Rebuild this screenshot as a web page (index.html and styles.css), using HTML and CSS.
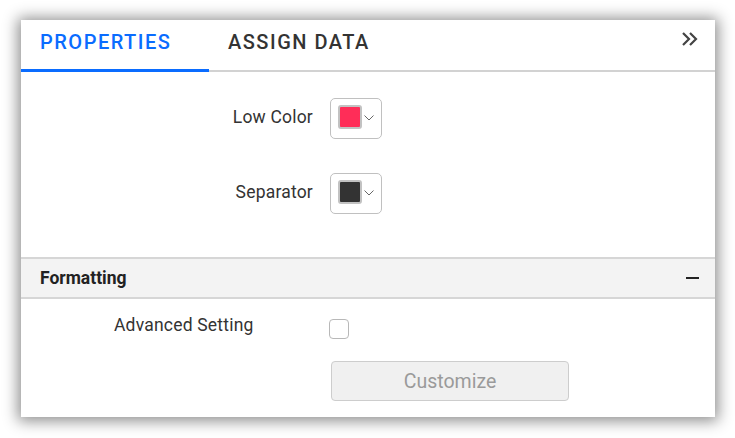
FILE: index.html
```html
<!DOCTYPE html>
<html>
<head>
<meta charset="utf-8">
<link rel="stylesheet" href="styles.css">
</head>
<body>
<div class="panel">
  <div class="tabs">
    <div class="tab active">PROPERTIES</div>
    <div class="tab">ASSIGN DATA</div>
    <div class="tab-spacer"></div>
    <div class="collapse">
      <svg width="18" height="16" viewBox="0 0 18 16"><path d="M2 2 L8 8 L2 14 M9 2 L15 8 L9 14" fill="none" stroke="#444" stroke-width="2.2"/></svg>
    </div>
  </div>
  <div class="form">
    <div class="row">
      <div class="label">Low Color</div>
      <div class="picker">
        <span class="swatch swatch-low"></span>
        <svg class="caret" width="10" height="6" viewBox="0 0 10 6"><path d="M0.5 0.5 L5 5 L9.5 0.5" fill="none" stroke="#666" stroke-width="1"/></svg>
      </div>
    </div>
    <div class="row">
      <div class="label">Separator</div>
      <div class="picker">
        <span class="swatch swatch-sep"></span>
        <svg class="caret" width="10" height="6" viewBox="0 0 10 6"><path d="M0.5 0.5 L5 5 L9.5 0.5" fill="none" stroke="#666" stroke-width="1"/></svg>
      </div>
    </div>
  </div>
  <div class="section-head">
    <span class="section-title">Formatting</span>
    <span class="minus"></span>
  </div>
  <div class="format-body">
    <div class="adv-row">
      <div class="adv-label">Advanced Setting</div>
      <span class="checkbox"></span>
    </div>
    <div class="btn-row">
      <button class="customize">Customize</button>
    </div>
  </div>
</div>
</body>
</html>
```

FILE: styles.css
```css
html, body {
  margin: 0;
  padding: 0;
  background: #fff;
}
body {
  padding: 20px 0 21px 21px;
  min-height: 438px;
  box-sizing: border-box;
  font-family: Roboto, "Liberation Sans", sans-serif;
}
.panel {
  width: 694px;
  height: 397px;
  background: #fff;
  box-shadow: 0 1px 14px 3px rgba(0,0,0,0.45);
  display: flex;
  flex-direction: column;
  overflow: hidden;
}
.tabs {
  display: flex;
  height: 50px;
  border-bottom: 2px solid #d2d2d2;
  flex-shrink: 0;
}
.tab {
  height: 50px;
  box-sizing: border-box;
  padding: 0 0 7px 19px;
  display: flex;
  align-items: center;
  font-size: 20px;
  font-weight: 500;
  letter-spacing: 1.5px;
  color: #333;
}
.tab.active {
  width: 188px;
  color: #0a6cff;
  height: 52px;
  margin-bottom: -2px;
  border-bottom: 3px solid #0a6cff;
  padding-bottom: 6px;
}
.tab-spacer { flex: 1; }
.collapse {
  width: 34px;
  display: flex;
  align-items: center;
  padding-bottom: 12px;
  box-sizing: border-box;
}
.form {
  display: flex;
  flex-direction: column;
  gap: 34px;
  padding-top: 26px;
  height: 185px;
  box-sizing: border-box;
  flex-shrink: 0;
}
.row {
  display: grid;
  grid-template-columns: 199px 52px;
  column-gap: 17px;
  padding-left: 93px;
  align-items: center;
  height: 41px;
}
.label {
  text-align: right;
  font-size: 17.5px;
  letter-spacing: 0.2px;
  color: #333;
  padding-bottom: 3px;
}
.picker {
  width: 52px;
  height: 41px;
  box-sizing: border-box;
  border: 1.5px solid #c0c0c0;
  border-radius: 5px;
  display: flex;
  align-items: center;
  padding: 0 0 3px 6.5px;
}
.swatch {
  width: 24px;
  height: 24px;
  box-sizing: border-box;
  border: 2px solid #c2c2c2;
  border-radius: 3px;
}
.swatch-low { background: #ff2d58; }
.swatch-sep { background: #333; }
.caret {
  margin-left: 2px;
  margin-top: 2px;
}
.section-head {
  height: 42px;
  box-sizing: border-box;
  border-top: 2px solid #d6d6d6;
  border-bottom: 2px solid #d6d6d6;
  background: #f3f3f3;
  display: flex;
  align-items: center;
  justify-content: space-between;
  padding: 0 16px 0 19px;
  flex-shrink: 0;
}
.section-title {
  font-size: 17.5px;
  font-weight: 700;
  color: #222;
}
.minus {
  width: 13px;
  height: 2px;
  background: #222;
}
.format-body {
  padding-top: 20px;
}
.adv-row {
  display: flex;
  align-items: flex-start;
  padding-left: 93px;
  height: 20px;
}
.adv-label {
  width: 215px;
  font-size: 17.5px;
  letter-spacing: 0.2px;
  color: #333;
  line-height: 20px;
  margin-top: -4px;
}
.checkbox {
  width: 20px;
  height: 20px;
  box-sizing: border-box;
  border: 1.5px solid #b8b8b8;
  border-radius: 4px;
}
.btn-row {
  padding: 22px 0 0 310px;
}
.customize {
  width: 238px;
  height: 40px;
  background: #f0f0f0;
  border: 1.5px solid #cdcdcd;
  border-radius: 4px;
  font-family: Roboto, "Liberation Sans", sans-serif;
  font-size: 19.5px;
  color: #9a9a9a;
  padding: 0;
}
```
